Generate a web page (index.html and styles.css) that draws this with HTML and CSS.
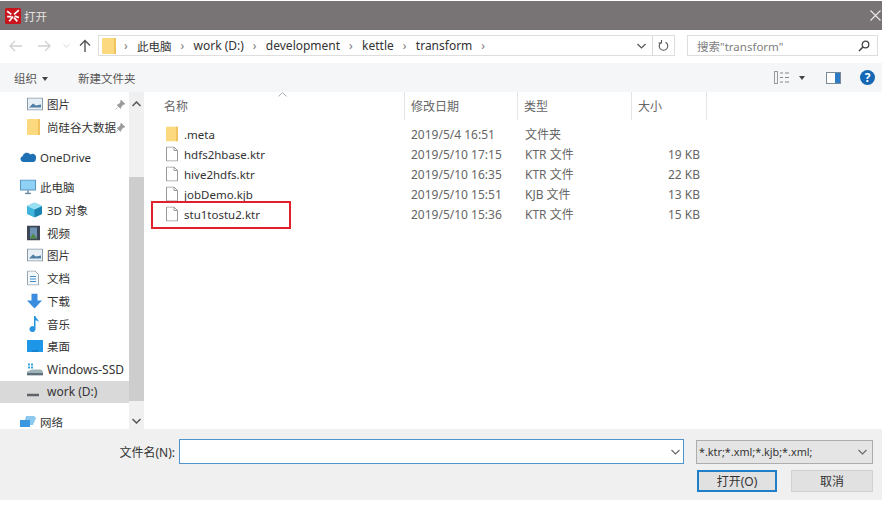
FILE: index.html
```html
<!DOCTYPE html>
<html lang="zh-CN">
<head>
  <meta charset="UTF-8"/>
  <title>打开</title>
  <link rel="stylesheet" href="styles.css">
</head>
<body>

<div class="dialog">
  <div class="titlebar">
    <svg class="app-icon" width="16" height="16" viewBox="0 0 15 15"><rect width="15" height="15" rx="1.5" fill="#c8141c"/><path d="M2 3l4 3M13 2L8.500 6M2 8h4M9 7.500l4 1.500M7.500 8l-3.500 4.500M8.500 9l3 3.500" stroke="#fff" stroke-width="1.600" fill="none"/></svg>
    <span class="title-text">打开</span>
    <svg class="close-icon" width="11" height="11" viewBox="0 0 11 11"><path d="M.5.5l10 10M10.500.5l-10 10" stroke="#e8e6e6" stroke-width="1.200"/></svg>
  </div>

  <div class="navbar">
    <div class="nav-buttons">
      <svg class="nav-back" width="14" height="12" viewBox="0 0 14 12"><path d="M1 6h12M6 1L1 6l5 5" stroke="#d0d0d0" stroke-width="1.300" fill="none"/></svg>
      <svg class="nav-forward" width="14" height="12" viewBox="0 0 14 12"><path d="M1 6h12M8 1l5 5-5 5" stroke="#d0d0d0" stroke-width="1.300" fill="none"/></svg>
      <svg class="nav-recent" width="7" height="4" viewBox="0 0 7 4"><path d="M.5.500l3 2.500 3-2.500" stroke="#d8d8d8" fill="none"/></svg>
      <svg class="nav-up" width="12" height="13" viewBox="0 0 12 13"><path d="M6 13V1.500M1 6.500l5-5 5 5" stroke="#555" stroke-width="1.400" fill="none"/></svg>
    </div>
    <div class="address">
      <svg class="addr-folder" width="14" height="16" viewBox="0 0 14 16"><rect width="14" height="16" rx="1" fill="#fcd87f"/><rect x="12" width="2" height="16" fill="#f0c260"/></svg>
      <span class="crumb-sep">›</span><span class="crumb-cjk">此电脑</span>
      <span class="crumb-sep">›</span><span>work (D:)</span>
      <span class="crumb-sep">›</span><span>development</span>
      <span class="crumb-sep">›</span><span>kettle</span>
      <span class="crumb-sep">›</span><span>transform</span>
      <span class="crumb-sep">›</span>
      <div class="addr-tools">
        <svg width="9" height="6" viewBox="0 0 9 6"><path d="M.5 1l4 4 4-4" stroke="#555" stroke-width="1.200" fill="none"/></svg>
        <span class="addr-divider"></span>
        <svg width="11" height="12" viewBox="0 0 11 12"><path d="M7.500 2.200a4.300 4.300 0 1 1-4 0M3.500 0v3h-3" stroke="#555" stroke-width="1.100" fill="none"/></svg>
      </div>
    </div>
    <div class="search">
      <span>搜索"transform"</span>
      <svg width="12" height="12" viewBox="0 0 12 12"><circle cx="7.500" cy="4.500" r="3.300" stroke="#444" stroke-width="1.300" fill="none"/><path d="M5 7l-4 4" stroke="#444" stroke-width="1.600"/></svg>
    </div>
  </div>

  <div class="toolbar">
    <span class="tool-item">组织 <i class="caret"></i></span>
    <span class="tool-item">新建文件夹</span>
    <div class="tool-right">
      <span class="view-group">
        <svg width="16" height="13" viewBox="0 0 16 13"><rect x=".5" y=".5" width="3" height="12" fill="none" stroke="#9a9a9a"/><path d="M6 2h3M11 2h4M6 6.500h3M11 6.500h4M6 11h3M11 11h4" stroke="#888"/></svg>
        <i class="caret"></i>
      </span>
      <svg class="pane-icon" width="15" height="12" viewBox="0 0 15 12"><rect x=".5" y=".5" width="14" height="11" fill="#fff" stroke="#7a8a99"/><rect x="9" y="1" width="5" height="10" fill="#2b7cc4"/></svg>
      <span class="help-icon">?</span>
    </div>
  </div>

  <div class="main">
    <div class="sidebar">
      <div class="nav-row indent small"><svg class="ico" width="16" height="13" viewBox="0 0 16 13"><rect x=".5" y=".5" width="15" height="12" fill="#e8f0f6" stroke="#8a99a8"/><path d="M2 10l4-4 3 2 5-1v3z" fill="#4f7ea6"/></svg><span>图片</span><svg class="pin" width="10" height="10" viewBox="0 0 10 10"><path d="M6 0l4 4-2 .5-2 2.500-.5 1.500L2 5l1.500-.5L5.500 2.500zM3 7L.5 9.500" fill="#9a9a9a" stroke="#9a9a9a" stroke-width=".6"/></svg></div>
      <div class="nav-row indent small"><svg class="ico" width="13" height="16" viewBox="0 0 13 16"><rect width="13" height="16" rx="1" fill="#fcd87f"/><rect x="11" width="2" height="16" fill="#f0c260"/></svg><span>尚硅谷大数据</span><svg class="pin" width="10" height="10" viewBox="0 0 10 10"><path d="M6 0l4 4-2 .5-2 2.500-.5 1.500L2 5l1.500-.5L5.500 2.500zM3 7L.5 9.500" fill="#9a9a9a" stroke="#9a9a9a" stroke-width=".6"/></svg></div>
      <div class="nav-row top group-gap small"><svg class="ico" width="16" height="10" viewBox="0 0 16 10"><path d="M3 10a3 3 0 0 1-.5-5.800A4.500 4.500 0 0 1 10.500 2.500 3.600 3.600 0 0 1 15.800 7 3 3 0 0 1 13 10z" fill="#1f6fb5"/></svg><span>OneDrive</span></div>
      <div class="nav-row top group-gap small"><svg class="ico" width="16" height="15" viewBox="0 0 16 15"><rect x=".5" y=".5" width="15" height="10" fill="#8fd0f5" stroke="#5a93bd"/><path d="M5 14h6M8 11v3" stroke="#6a8aa0" stroke-width="1.500"/></svg><span>此电脑</span></div>
      <div class="nav-row indent small"><svg class="ico" width="15" height="15" viewBox="0 0 15 15"><path d="M7.500 0L15 3.500v8L7.500 15 0 11.500v-8z" fill="#3fb4dc"/><path d="M7.500 7L15 3.500v8L7.500 15z" fill="#1a83b0"/><path d="M7.500 0L15 3.500 7.500 7 0 3.500z" fill="#9be0f2"/></svg><span>3D 对象</span></div>
      <div class="nav-row indent small"><svg class="ico" width="13" height="15" viewBox="0 0 13 15"><rect width="13" height="15" fill="#3c4654"/><rect x="3" y="2" width="7" height="11" fill="#6f93b5"/><path d="M3 13l3-5 4 5z" fill="#4f8a3c"/></svg><span>视频</span></div>
      <div class="nav-row indent small"><svg class="ico" width="16" height="13" viewBox="0 0 16 13"><rect x=".5" y=".5" width="15" height="12" fill="#e8f0f6" stroke="#8a99a8"/><path d="M2 10l4-4 3 2 5-1v3z" fill="#4f7ea6"/></svg><span>图片</span></div>
      <div class="nav-row indent small"><svg class="ico" width="12" height="15" viewBox="0 0 12 15"><path d="M.5.500h7.500l3.500 3.500v10.500H.5z" fill="#f4f7fa" stroke="#9aa7b3"/><path d="M3 6h6M3 8.500h6M3 11h6" stroke="#3f8fcf"/></svg><span>文档</span></div>
      <div class="nav-row indent small"><svg class="ico" width="15" height="15" viewBox="0 0 15 15"><path d="M4.500 0h6v7H15l-7.500 8L0 7h4.500z" fill="#3a8dde"/></svg><span>下载</span></div>
      <div class="nav-row indent small"><svg class="ico" width="15" height="16" viewBox="0 0 15 16"><path d="M7 0h1.500c.3 2.500 3 3 3.500 6-1-1-2.500-1.700-3.500-1.800V13a3 3 0 1 1-1.500-2.500z" fill="#2a94e0"/></svg><span>音乐</span></div>
      <div class="nav-row indent small"><svg class="ico" width="16" height="12" viewBox="0 0 16 12"><rect width="16" height="12" rx=".5" fill="#1e96e8"/><path d="M5 11h6" stroke="#0e6cb0"/></svg><span>桌面</span></div>
      <div class="nav-row indent"><svg class="ico" width="16" height="13" viewBox="0 0 16 13"><path d="M1 1h2v2H1zM4 1h2v2H4zM1 4h2v2H1zM4 4h2v2H4z" fill="#35a3dc"/><path d="M0 9l5-2h9l2 2v4H0z" fill="#9db3b8"/><rect y="10.500" width="16" height="2.500" fill="#5f7078"/></svg><span>Windows-SSD</span></div>
      <div class="nav-row indent selected"><svg class="ico drive-ico" width="12" height="3" viewBox="0 0 12 3"><rect width="12" height="3" fill="#5f6367"/></svg><span>work (D:)</span></div>
      <div class="nav-row top network small"><svg class="ico" width="16" height="14" viewBox="0 0 16 14"><path d="M0 5h10v7H0z" fill="#3a97e0"/><path d="M6 1h8l2 2-3 7h-3V5H5z" fill="#8cc8f0"/></svg><span>网络</span></div>
    </div>
    <div class="scrollbar">
      <svg class="arrow-up" width="9" height="6" viewBox="0 0 9 6"><path d="M.5 5l4-4 4 4" stroke="#555" stroke-width="1.500" fill="none"/></svg>
      <div class="thumb"></div>
      <svg class="arrow-down" width="9" height="6" viewBox="0 0 9 6"><path d="M.5 1l4 4 4-4" stroke="#555" stroke-width="1.500" fill="none"/></svg>
    </div>
    <div class="files">
      <div class="file-head">
        <div class="col-name">名称<svg class="sort-mark" width="9" height="5" viewBox="0 0 9 5"><path d="M.5 4.500l4-4 4 4" stroke="#aaa" fill="none"/></svg></div>
        <div class="col-date">修改日期</div>
        <div class="col-type">类型</div>
        <div class="col-size">大小</div>
      </div>
      <div class="file-row">
        <div class="col-name"><svg class="file-ico" width="12" height="15" viewBox="0 0 12 15"><rect width="12" height="15" rx="1" fill="#fcd87f"/><rect x="10" width="2" height="15" fill="#f0c260"/></svg>.meta</div>
        <div class="col-date">2019/5/4 16:51</div>
        <div class="col-type">文件夹</div>
        <div class="col-size"></div>
      </div>
      <div class="file-row">
        <div class="col-name"><svg class="file-ico" width="12" height="15" viewBox="0 0 12 15"><path d="M.5.500h7.500l3.500 3.500v10.500H.5zM8 .500v3.500h3.500" fill="#fff" stroke="#9a9a9a"/></svg>hdfs2hbase.ktr</div>
        <div class="col-date">2019/5/10 17:15</div>
        <div class="col-type">KTR 文件</div>
        <div class="col-size">19 KB</div>
      </div>
      <div class="file-row">
        <div class="col-name"><svg class="file-ico" width="12" height="15" viewBox="0 0 12 15"><path d="M.5.500h7.500l3.500 3.500v10.500H.5zM8 .500v3.500h3.500" fill="#fff" stroke="#9a9a9a"/></svg>hive2hdfs.ktr</div>
        <div class="col-date">2019/5/10 16:35</div>
        <div class="col-type">KTR 文件</div>
        <div class="col-size">22 KB</div>
      </div>
      <div class="file-row">
        <div class="col-name"><svg class="file-ico" width="12" height="15" viewBox="0 0 12 15"><path d="M.5.500h7.500l3.500 3.500v10.500H.5zM8 .500v3.500h3.500" fill="#fff" stroke="#9a9a9a"/></svg>jobDemo.kjb</div>
        <div class="col-date">2019/5/10 15:51</div>
        <div class="col-type">KJB 文件</div>
        <div class="col-size">13 KB</div>
      </div>
      <div class="file-row marked">
        <div class="col-name"><svg class="file-ico" width="12" height="15" viewBox="0 0 12 15"><path d="M.5.500h7.500l3.500 3.500v10.500H.5zM8 .500v3.500h3.500" fill="#fff" stroke="#9a9a9a"/></svg>stu1tostu2.ktr</div>
        <div class="col-date">2019/5/10 15:36</div>
        <div class="col-type">KTR 文件</div>
        <div class="col-size">15 KB</div>
      </div>
    </div>
  </div>

  <div class="footer">
    <div class="footer-row">
      <label class="name-label" for="fileName">文件名(N):</label>
      <div class="name-input">
        <input id="fileName" type="text"/>
        <svg width="9" height="6" viewBox="0 0 9 6"><path d="M.5 1l4 4 4-4" stroke="#666" stroke-width="1.100" fill="none"/></svg>
      </div>
      <div class="filter">
        <span>*.ktr;*.xml;*.kjb;*.xml;</span>
        <svg width="9" height="6" viewBox="0 0 9 6"><path d="M.5 1l4 4 4-4" stroke="#666" stroke-width="1.100" fill="none"/></svg>
      </div>
    </div>
    <div class="footer-buttons">
      <button class="btn btn-open">打开(O)</button>
      <button class="btn">取消</button>
    </div>
  </div>
</div>

</body>
</html>
```

FILE: styles.css
```css
* {
  box-sizing: border-box;
}

body {
  margin: 0;
  padding: 1px 0 0;
  background: #fff;
  font-family: "Noto Sans", "Noto Sans CJK SC", sans-serif;
  font-size: 12px;
  color: #444;
}

.dialog {
  width: 882px;
  height: 499px;
  display: flex;
  flex-direction: column;
  background: #fff;
}

.titlebar {
  height: 29px;
  flex: none;
  background: #787374;
  display: flex;
  align-items: center;
  padding: 0 1px 0 5px;
  color: #e6e3e3;
}

.title-text {
  margin-left: 3px;
  font-size: 11.500px;
}

.close-icon {
  margin-left: auto;
}

.navbar {
  height: 33px;
  flex: none;
  display: flex;
  align-items: center;
  padding: 0 4px 2px 0;
}

.nav-buttons {
  width: 98px;
  position: relative;
  height: 14px;
  display: flex;
  align-items: center;
}

.nav-back {
  margin-left: 9px;
}

.nav-forward {
  margin-left: 14px;
}

.nav-recent {
  margin-left: 12px;
}

.nav-up {
  margin-left: 9px;
}

.address {
  width: 577px;
  height: 21px;
  border: 1px solid #dedede;
  display: flex;
  align-items: center;
  color: #333;
  padding-left: 3px;
}

.addr-folder {
  margin-right: 8px;
}

.crumb-sep {
  color: #777;
  width: 13px;
}

.address span:not(.crumb-sep):not(.addr-divider) {
  margin-right: 9px;
}

.address .crumb-cjk {
  font-size: 11.500px;
  margin-right: 13px;
}

.addr-tools {
  margin-left: auto;
  display: flex;
  align-items: center;
  height: 100%;
  padding-right: 5px;
}

.addr-divider {
  width: 1px;
  height: 100%;
  background: #d9d9d9;
  margin: 0 5px 0 6px;
}

.search {
  width: 191px;
  height: 21px;
  margin-left: 12px;
  border: 1px solid #dedede;
  display: flex;
  align-items: center;
  justify-content: space-between;
  padding: 0 7px 0 9px;
  color: #808080;
  font-size: 11.500px;
}

.toolbar {
  height: 29px;
  flex: none;
  background: #f5f6f7;
  display: flex;
  align-items: center;
  padding: 0 7px 0 14px;
  color: #555;
  font-size: 11.500px;
}

.tool-item:first-child {
  margin-right: 30px;
}

.caret {
  display: inline-block;
  border: 3.500px solid transparent;
  border-top: 4px solid #444;
  border-bottom: 0;
  vertical-align: middle;
  margin-left: 2px;
}

.tool-right {
  margin-left: auto;
  display: flex;
  align-items: center;
}

.view-group {
  display: flex;
  align-items: center;
  gap: 7px;
  margin-right: 21px;
}

.pane-icon {
  margin-right: 19px;
}

.help-icon {
  width: 15px;
  height: 15px;
  border-radius: 50%;
  background: #1668b4;
  color: #fff;
  font-weight: bold;
  font-size: 12px;
  line-height: 15px;
  text-align: center;
}

.main {
  flex: 1;
  display: flex;
  min-height: 0;
  overflow: hidden;
}

.sidebar {
  width: 129px;
  flex: none;
  color: #333;
}

.nav-row {
  height: 22.750px;
  display: flex;
  align-items: center;
  position: relative;
  white-space: nowrap;
}

.nav-row:first-child {
  margin-top: 1px;
}

.nav-row.small {
  font-size: 11.500px;
}

.nav-row .ico {
  position: absolute;
  top: 50%;
  transform: translateY(-50%);
}

.nav-row.indent {
  padding-left: 47px;
}

.nav-row.indent .ico {
  left: 27px;
}

.nav-row.top {
  padding-left: 40px;
}

.nav-row.top .ico {
  left: 20px;
}

.nav-row .drive-ico {
  left: 29px;
  margin-top: 3px;
}

.group-gap {
  margin-top: 7.300px;
}

.network {
  margin-top: 7.500px;
}

.selected {
  background: #d9d9d9;
}

.pin {
  position: absolute;
  right: 4px;
  top: 7px;
}

.scrollbar {
  width: 15px;
  flex: none;
  background: #f0f0f0;
  position: relative;
  display: flex;
  flex-direction: column;
  align-items: center;
}

.arrow-up {
  position: absolute;
  top: 9px;
}

.arrow-down {
  position: absolute;
  bottom: 5px;
}

.thumb {
  position: absolute;
  top: 85px;
  width: 100%;
  height: 224px;
  background: #cdcdcd;
}

.files {
  flex: 1;
  padding-left: 7px;
  color: #666;
}

.file-head {
  display: flex;
  height: 28px;
  align-items: center;
  margin-bottom: 4px;
}

.file-head > div {
  height: 100%;
  display: flex;
  align-items: center;
  border-right: 1px solid #e5e5e5;
  padding-left: 6px;
}

.col-name {
  width: 254px;
  position: relative;
}

.col-date {
  width: 113px;
}

.col-type {
  width: 114px;
}

.col-size {
  width: 75px;
}

.file-head .col-name {
  padding-left: 13px;
}

.sort-mark {
  position: absolute;
  left: 127px;
  top: 0;
}

.file-row {
  display: flex;
  height: 20px;
  align-items: center;
  position: relative;
  white-space: nowrap;
}

.file-row .col-name {
  padding-left: 33px;
  color: #333;
  font-size: 11.500px;
}

.file-row .col-date {
  padding-left: 6px;
}

.file-row .col-type {
  padding-left: 7px;
}

.file-row .col-size {
  text-align: right;
  padding-right: 7px;
}

.file-ico {
  position: absolute;
  left: 15px;
  top: 50%;
  transform: translateY(-50%);
}

.marked::after {
  content: "";
  box-sizing: border-box;
  position: absolute;
  left: 0;
  top: -3px;
  width: 140px;
  height: 28px;
  border: 2px solid #e0202c;
  pointer-events: none;
}

.footer {
  height: 71px;
  flex: none;
  background: #f0f0f0;
  padding: 10px 9px 0 0;
}

.footer-row {
  display: flex;
  align-items: center;
  height: 25px;
}

.name-label {
  width: 175px;
  text-align: right;
  color: #333;
}

.name-input {
  width: 505px;
  height: 25px;
  margin-left: 4px;
  background: #fff;
  border: 1px solid #4f94cd;
  display: flex;
  align-items: center;
  padding-right: 3px;
}

.name-input input {
  flex: 1;
  min-width: 0;
  border: none;
  outline: none;
  background: transparent;
}

.filter {
  width: 177px;
  height: 24px;
  margin-left: 12px;
  background: #e5e5e5;
  border: 1px solid #adadad;
  display: flex;
  align-items: center;
  justify-content: space-between;
  padding: 0 5px 0 2px;
  color: #333;
  font-size: 10.800px;
}

.footer-buttons {
  display: flex;
  justify-content: flex-end;
  gap: 14px;
  margin-top: 6px;
}

.btn {
  width: 82px;
  height: 22px;
  font: inherit;
  color: #333;
  background: #e1e1e1;
  border: 1px solid #d0d0d0;
  padding: 0;
}

.btn-open {
  width: 80px;
  border: 2px solid #1f7fc8;
}
```
